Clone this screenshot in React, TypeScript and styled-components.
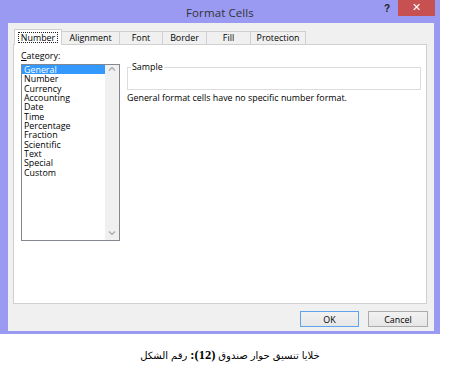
import styled, { createGlobalStyle } from "styled-components";

const GlobalStyle = createGlobalStyle`
	html, body {
		margin: 0;
		padding: 0;
		background: #ffffff;
	}
	body {
		font-family: "Open Sans", "Noto Sans", "DejaVu Sans", sans-serif;
		color: #000;
	}
`;

const Page = styled.div`
	width: 450px;
	height: 377px;
	display: flex;
	flex-direction: column;
	overflow: hidden;
`;

const Window = styled.div`
	width: 440px;
	background: #9a9af2;
	display: flex;
	flex-direction: column;
	padding-bottom: 3px;
`;

const TitleBar = styled.div`
	height: 23px;
	display: grid;
	grid-template-columns: 1fr auto 1fr;
	align-items: start;
`;

const Title = styled.div`
	grid-column: 2;
	font-size: 11.5px;
	line-height: 26px;
	color: #333;
	letter-spacing: 0.1px;
`;

const Controls = styled.div`
	grid-column: 3;
	justify-self: end;
	display: flex;
	align-items: flex-start;
	gap: 8px;
	margin-right: 5px;
`;

const Help = styled.span`
	font-family: "Liberation Sans", Arial, sans-serif;
	font-weight: 700;
	font-size: 10px;
	line-height: 18px;
	color: #222;
`;

const Close = styled.div`
	width: 37px;
	height: 16px;
	background: #c75050;
	display: flex;
	align-items: center;
	justify-content: center;
	color: #fff;
	font-family: "DejaVu Sans", sans-serif;
	font-size: 11px;
	font-weight: 700;
	line-height: 16px;
`;

const Body = styled.div`
	margin: 0 6px 0 8px;
	background: #f0f0f0;
	padding: 6px 7px 4px 5px;
	display: flex;
	flex-direction: column;
`;

const Tabs = styled.div`
	display: flex;
	align-items: flex-end;
	height: 15px;
	padding-left: 1px;
	position: relative;
	z-index: 1;
`;

const Tab = styled.div<{ $w: number; $active?: boolean }>`
	box-sizing: border-box;
	width: ${(p) => p.$w}px;
	height: ${(p) => (p.$active ? 16 : 13)}px;
	margin-bottom: ${(p) => (p.$active ? -1 : 0)}px;
	border: 1px solid #d0d0d0;
	border-bottom: none;
	border-left-width: ${(p) => (p.$active ? 1 : 0)}px;
	background: ${(p) => (p.$active ? "#ffffff" : "#f0f0f0")};
	display: flex;
	align-items: flex-start;
	justify-content: center;
	padding-top: ${(p) => (p.$active ? 2 : 1)}px;
	font-size: 8.9px;
	line-height: 10px;
	color: #000;
	&:first-child {
		border-left-width: 1px;
	}
`;

const Focus = styled.span`
	border: 1px dotted #222;
	padding: 0 2px;
	line-height: 9px;
`;

const Panel = styled.div`
	box-sizing: border-box;
	height: 260px;
	background: #ffffff;
	border: 1px solid #d0d0d0;
	padding: 6px 5px 0 7px;
	display: grid;
	grid-template-columns: 99px 1fr;
	column-gap: 7px;
	align-items: start;
`;

const Column = styled.div`
	display: flex;
	flex-direction: column;
`;

const Label = styled.div`
	font-size: 8.9px;
	line-height: 10px;
	color: #000;
	u {
		text-decoration-thickness: 1px;
		text-underline-offset: 1px;
	}
`;

const ListBox = styled.div`
	box-sizing: border-box;
	margin-top: 3px;
	height: 177px;
	border: 1px solid #828790;
	display: flex;
	background: #fff;
`;

const Items = styled.div`
	flex: 1;
	display: flex;
	flex-direction: column;
`;

const Item = styled.div<{ $selected?: boolean }>`
	font-size: 8.9px;
	line-height: 9.35px;
	height: 9.35px;
	padding-left: 2px;
	color: ${(p) => (p.$selected ? "#ffffff" : "#000")};
	background: ${(p) => (p.$selected ? "#3399ff" : "transparent")};
	white-space: nowrap;
`;

const ScrollBar = styled.div`
	width: 14px;
	background: #f0f0f0;
	display: flex;
	flex-direction: column;
	justify-content: space-between;
	align-items: center;
	padding: 1px 0 4px;
`;

const Arrow = styled.svg`
	width: 8px;
	height: 6px;
	display: block;
`;

const Group = styled.fieldset`
	box-sizing: border-box;
	margin: 11px 0 0;
	padding: 0;
	height: 28px;
	border: 1px solid #dcdcdc;
	legend {
		margin-left: 3px;
		padding: 0 1px;
		font-size: 8.9px;
		line-height: 10px;
		color: #000;
	}
`;

const Description = styled.div`
	margin-top: 3px;
	font-size: 8.9px;
	line-height: 10px;
	color: #000;
	white-space: nowrap;
`;

const Buttons = styled.div`
	display: flex;
	justify-content: flex-end;
	gap: 9px;
	margin-top: 7px;
	margin-right: -1px;
`;

const Button = styled.div<{ $w: number; $default?: boolean }>`
	box-sizing: border-box;
	width: ${(p) => p.$w}px;
	height: 16px;
	border: 1px solid ${(p) => (p.$default ? "#5fa3ea" : "#acacac")};
	background: linear-gradient(#f2f2f2, #e6e6e6);
	display: flex;
	align-items: center;
	justify-content: center;
	font-size: 8.9px;
	color: #000;
`;

const Caption = styled.div`
	direction: ltr;
	display: flex;
	justify-content: center;
	align-items: baseline;
	gap: 3px;
	margin-top: 14px;
	padding-left: 10px;
	color: #000;
`;

const Word = styled.span`
	font-family: "DejaVu Sans", sans-serif;
	font-size: 10px;
	line-height: 14px;
	unicode-bidi: isolate;
`;

const Num = styled.span`
	font-family: "Liberation Serif", "Times New Roman", serif;
	font-weight: 700;
	font-size: 12.5px;
	line-height: 14px;
	unicode-bidi: isolate;
`;

const tabs = [
	{ label: "Number", w: 48 },
	{ label: "Alignment", w: 58 },
	{ label: "Font", w: 43 },
	{ label: "Border", w: 44 },
	{ label: "Fill", w: 44 },
	{ label: "Protection", w: 55 },
];

const categories = [
	"General",
	"Number",
	"Currency",
	"Accounting",
	"Date",
	"Time",
	"Percentage",
	"Fraction",
	"Scientific",
	"Text",
	"Special",
	"Custom",
];

// caption words, shown left to right as in the source document
const captionWords = ["الشكل", "رقم", ":(12)", "صندوق", "حوار", "تنسيق", "خلايا"];

export default function App() {
	return (
		<Page>
			<GlobalStyle />
			<Window>
				<TitleBar>
					<Title>Format Cells</Title>
					<Controls>
						<Help>?</Help>
						<Close>✕</Close>
					</Controls>
				</TitleBar>
				<Body>
					<Tabs>
						{tabs.map((t, i) => (
							<Tab key={t.label} $w={t.w} $active={i === 0}>
								{i === 0 ? <Focus>{t.label}</Focus> : t.label}
							</Tab>
						))}
					</Tabs>
					<Panel>
						<Column>
							<Label>
								<u>C</u>ategory:
							</Label>
							<ListBox>
								<Items>
									{categories.map((c, i) => (
										<Item key={c} $selected={i === 0}>
											{c}
										</Item>
									))}
								</Items>
								<ScrollBar>
									<Arrow viewBox="0 0 8 6">
										<path d="M1 4.5 L4 1.5 L7 4.5" fill="none" stroke="#a6a6a6" strokeWidth="1.2" />
									</Arrow>
									<Arrow viewBox="0 0 8 6">
										<path d="M1 1.5 L4 4.5 L7 1.5" fill="none" stroke="#a6a6a6" strokeWidth="1.2" />
									</Arrow>
								</ScrollBar>
							</ListBox>
						</Column>
						<Column>
							<Group>
								<legend>Sample</legend>
							</Group>
							<Description>General format cells have no specific number format.</Description>
						</Column>
					</Panel>
					<Buttons>
						<Button $w={59} $default>
							OK
						</Button>
						<Button $w={60}>Cancel</Button>
					</Buttons>
				</Body>
			</Window>
			<Caption>
				{captionWords.map((w) =>
					w.includes("12") ? <Num key={w}>{w}</Num> : <Word key={w}>{w}</Word>
				)}
			</Caption>
		</Page>
	);
}
